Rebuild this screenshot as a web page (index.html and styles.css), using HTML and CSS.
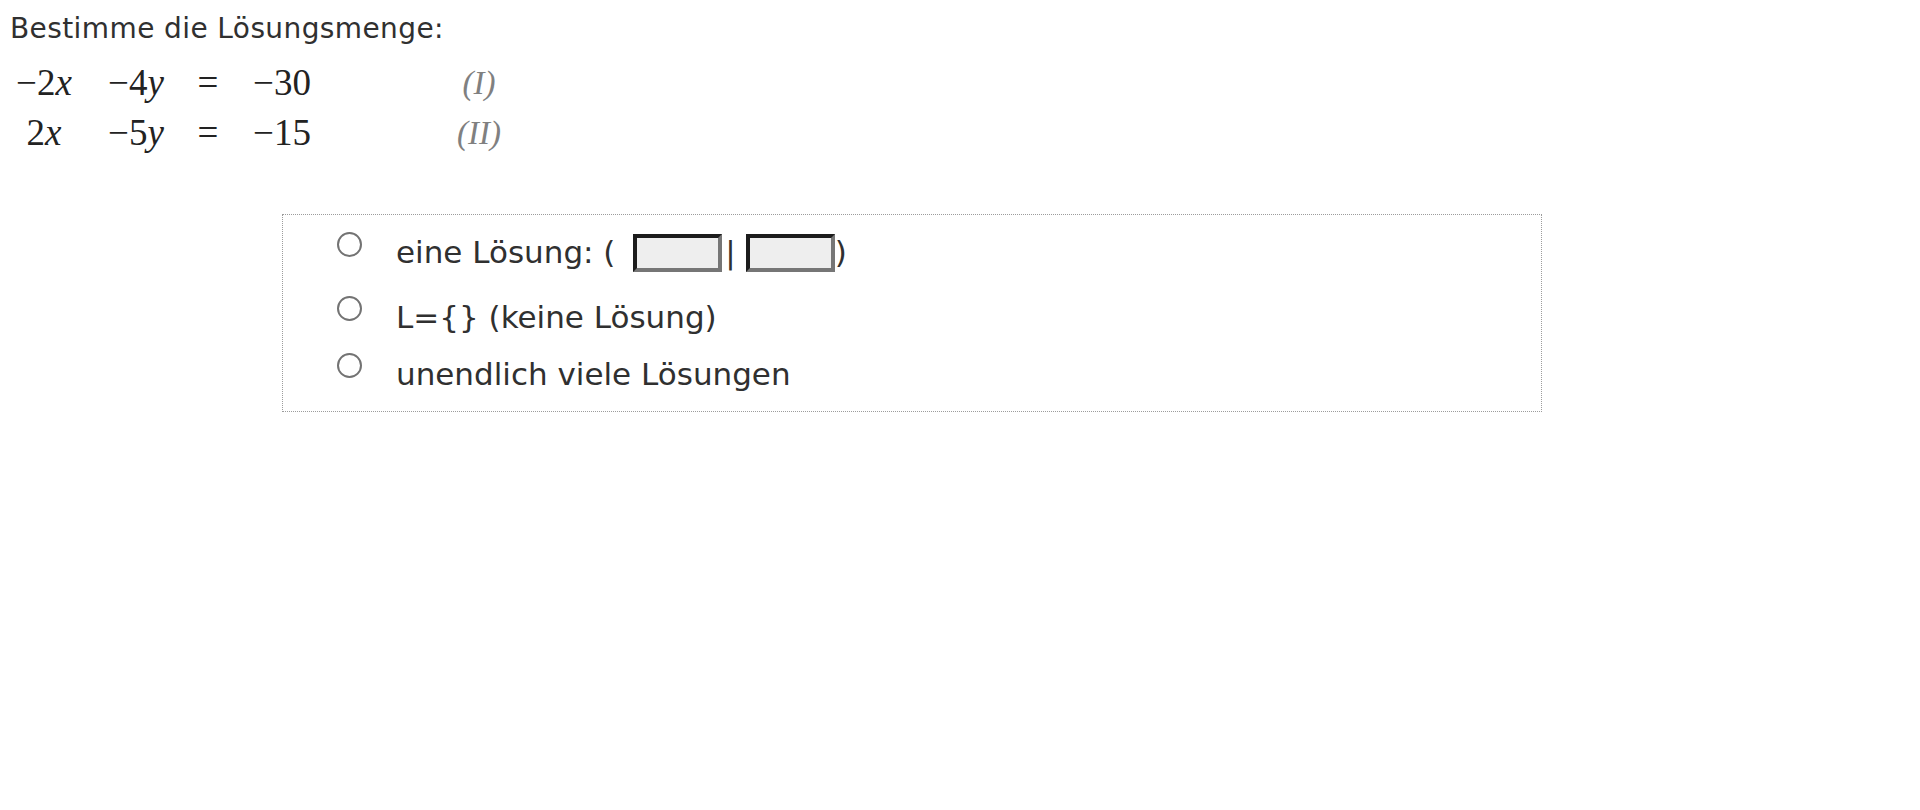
FILE: index.html
```html
<!DOCTYPE html>
<html lang="de">
<head>
<meta charset="utf-8">
<title>Lösungsmenge</title>
<link rel="stylesheet" href="styles.css">
</head>
<body>
<div class="page">
  <p class="task">Bestimme die Lösungsmenge:</p>
  <div class="system">
    <span class="c1">−2<i>x</i></span><span class="c2">−4<i>y</i></span><span class="c3">=</span><span class="c4">−30</span><span class="c5 tag">(I)</span>
    <span class="c1">2<i>x</i></span><span class="c2">−5<i>y</i></span><span class="c3">=</span><span class="c4">−15</span><span class="c5 tag">(II)</span>
  </div>
  <div class="choices">
    <label class="option">
      <span class="radio"></span>
      <span class="text">eine Lösung: ( <input class="field first" type="text" aria-label="x"><span class="sep">|</span> <input class="field" type="text" aria-label="y">)</span>
    </label>
    <label class="option">
      <span class="radio"></span>
      <span class="text">L={} (keine Lösung)</span>
    </label>
    <label class="option">
      <span class="radio"></span>
      <span class="text">unendlich viele Lösungen</span>
    </label>
  </div>
</div>
</body>
</html>
```
FILE: styles.css
```css
html, body {
  margin: 0;
  padding: 0;
  background: #ffffff;
}

.page {
  padding: 13px 10px;
  color: #303030;
  font-family: "DejaVu Sans", Verdana, sans-serif;
}

.task {
  margin: 0;
  font-size: 28px;
  letter-spacing: 0.4px;
  line-height: 32px;
}

.system {
  margin-top: 13px;
  display: grid;
  grid-template-columns: 68px 116px 28px 120px 274px;
  grid-auto-rows: 50px;
  justify-items: center;
  font-family: "Liberation Serif", "Times New Roman", serif;
  font-size: 37px;
  line-height: 50px;
  color: #222;
}

.system i {
  font-style: italic;
}

.tag {
  font-style: italic;
  color: #808080;
  font-size: 33px;
}

.choices {
  margin: 56px 0 0 272px;
  width: 1260px;
  border: 1px dotted #9c9c9c;
  padding: 19px 0 19px 54px;
  box-sizing: border-box;
  display: flex;
  flex-direction: column;
  gap: 22px;
}

.option {
  display: flex;
  align-items: flex-start;
  gap: 34px;
  font-size: 31px;
  line-height: 35px;
}

.option:first-child {
  padding-bottom: 8px;
}

.radio {
  flex: none;
  width: 25px;
  height: 25px;
  box-sizing: border-box;
  border: 2px solid #737373;
  border-radius: 50%;
  margin-top: -2px;
}

.option + .option .radio {
  margin-top: -4px;
}

.field {
  width: 89px;
  height: 38px;
  box-sizing: border-box;
  margin: 0 0 -2px 0;
  padding: 0;
  font-size: 30px;
  background: #eeeeee;
  border-style: solid;
  border-width: 4px;
  border-color: #1c1c1c #767676 #767676 #1c1c1c;
  vertical-align: text-bottom;
}

.field.first {
  margin-left: 8px;
}

.sep {
  margin-left: 3px;
}
```
